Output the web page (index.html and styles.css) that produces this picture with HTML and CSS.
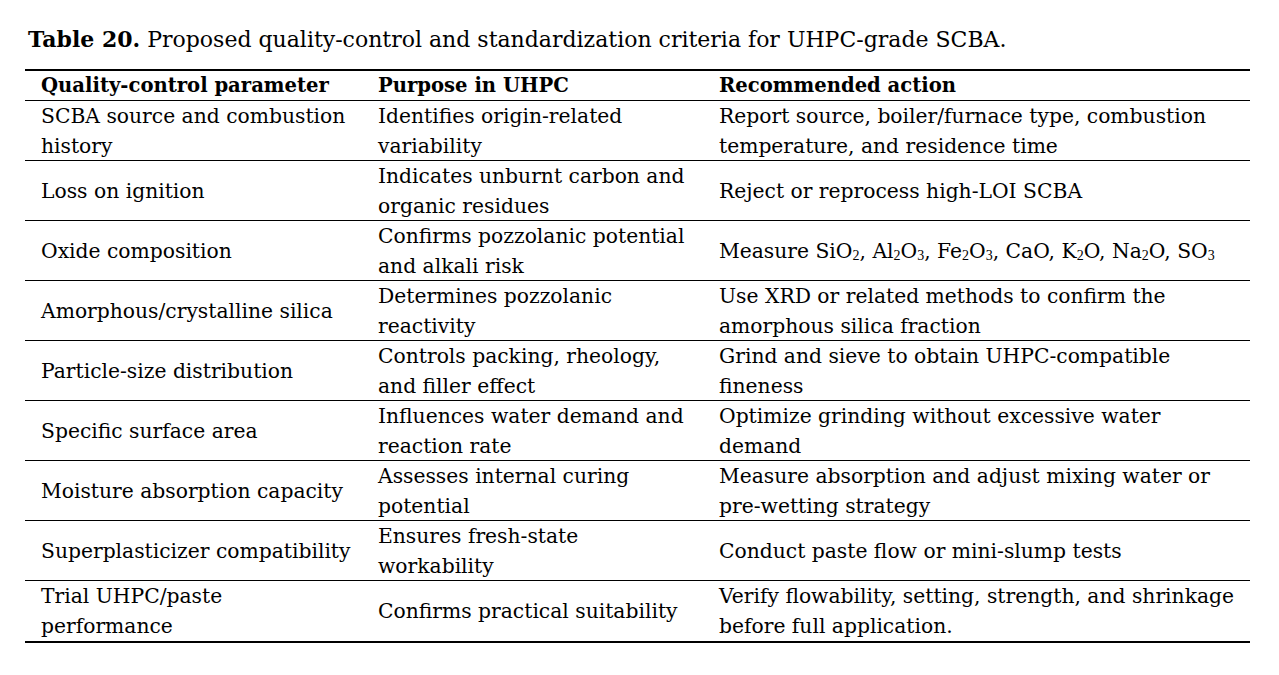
FILE: index.html
```html
<!DOCTYPE html>
<html lang="en">
<head>
<meta charset="utf-8">
<title>Table 20</title>
<link rel="stylesheet" href="styles.css">
</head>
<body>
<div class="page">
  <p class="caption"><b>Table 20.</b> Proposed quality-control and standardization criteria for UHPC-grade SCBA.</p>
  <div class="table">
    <div class="row head">
      <div class="cell">Quality-control parameter</div>
      <div class="cell">Purpose in UHPC</div>
      <div class="cell">Recommended action</div>
    </div>
    <div class="row">
      <div class="cell">SCBA source and combustion<br>history</div>
      <div class="cell">Identifies origin-related<br>variability</div>
      <div class="cell">Report source, boiler/furnace type, combustion<br>temperature, and residence time</div>
    </div>
    <div class="row">
      <div class="cell">Loss on ignition</div>
      <div class="cell">Indicates unburnt carbon and<br>organic residues</div>
      <div class="cell">Reject or reprocess high-LOI SCBA</div>
    </div>
    <div class="row">
      <div class="cell">Oxide composition</div>
      <div class="cell">Confirms pozzolanic potential<br>and alkali risk</div>
      <div class="cell">Measure SiO<sub>2</sub>, Al<sub>2</sub>O<sub>3</sub>, Fe<sub>2</sub>O<sub>3</sub>, CaO, K<sub>2</sub>O, Na<sub>2</sub>O, SO<sub>3</sub></div>
    </div>
    <div class="row">
      <div class="cell">Amorphous/crystalline silica</div>
      <div class="cell">Determines pozzolanic<br>reactivity</div>
      <div class="cell">Use XRD or related methods to confirm the<br>amorphous silica fraction</div>
    </div>
    <div class="row">
      <div class="cell">Particle-size distribution</div>
      <div class="cell">Controls packing, rheology,<br>and filler effect</div>
      <div class="cell">Grind and sieve to obtain UHPC-compatible<br>fineness</div>
    </div>
    <div class="row">
      <div class="cell">Specific surface area</div>
      <div class="cell">Influences water demand and<br>reaction rate</div>
      <div class="cell">Optimize grinding without excessive water<br>demand</div>
    </div>
    <div class="row">
      <div class="cell">Moisture absorption capacity</div>
      <div class="cell">Assesses internal curing<br>potential</div>
      <div class="cell">Measure absorption and adjust mixing water or<br>pre-wetting strategy</div>
    </div>
    <div class="row">
      <div class="cell">Superplasticizer compatibility</div>
      <div class="cell">Ensures fresh-state<br>workability</div>
      <div class="cell">Conduct paste flow or mini-slump tests</div>
    </div>
    <div class="row last">
      <div class="cell">Trial UHPC/paste<br>performance</div>
      <div class="cell">Confirms practical suitability</div>
      <div class="cell">Verify flowability, setting, strength, and shrinkage<br>before full application.</div>
    </div>
  </div>
</div>
</body>
</html>
```
FILE: styles.css
```css
html, body {
  margin: 0;
  padding: 0;
  background: #ffffff;
}
body {
  font-family: "DejaVu Serif", "Liberation Serif", serif;
  color: #000000;
}
.page {
  padding: 23px 29px 0 25px;
}
.caption {
  margin: 0 0 13px 3px;
  font-size: 22px;
  line-height: 32px;
  white-space: nowrap;
}
.table {
  width: 1225px;
  border-top: 2px solid #000;
  border-bottom: 2px solid #000;
}
.row {
  display: grid;
  grid-template-columns: 337px 341px 1fr;
  height: 60px;
  border-bottom: 1.5px solid #000;
  box-sizing: border-box;
}
.row.last {
  border-bottom: none;
}
.row.head {
  height: 30px;
}
.row.head .cell {
  font-weight: bold;
  font-size: 19.6px;
}
.cell {
  padding-left: 16px;
  align-self: center;
  font-size: 20.3px;
  line-height: 30px;
  white-space: nowrap;
}
sub {
  font-family: "Liberation Serif", serif;
  font-size: 14px;
  vertical-align: baseline;
  position: relative;
  top: 2px;
  line-height: 0;
}
```
